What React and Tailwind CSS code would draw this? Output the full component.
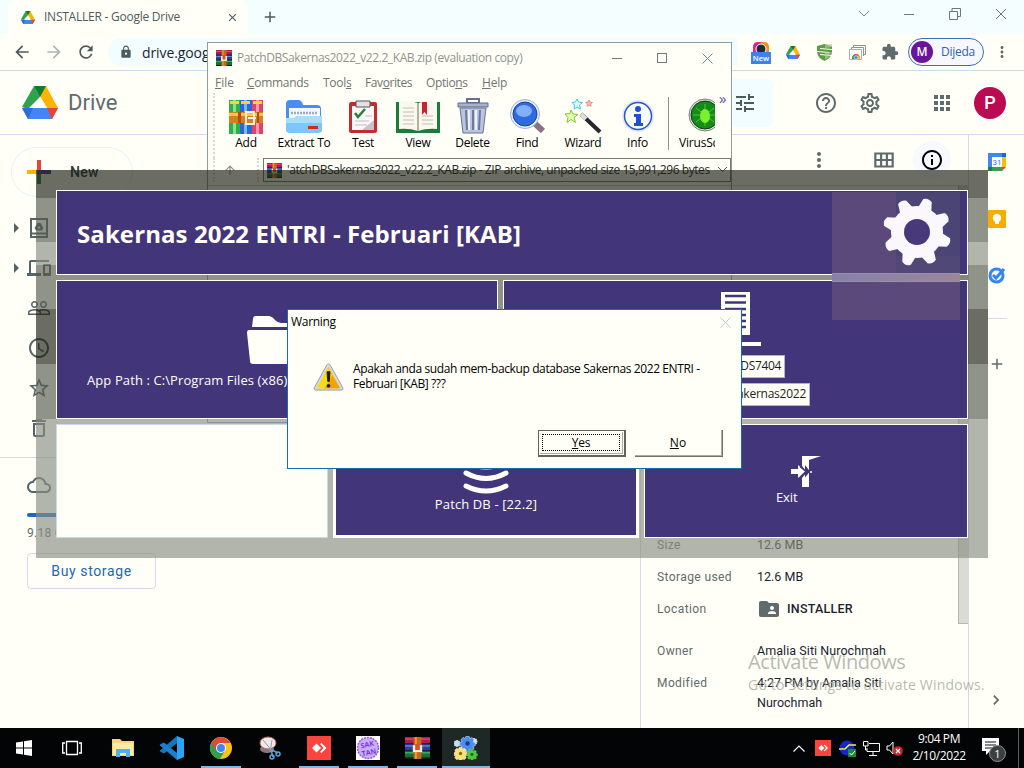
import React from "react";
import {
  MdArrowBack, MdArrowForward, MdRefresh, MdLock, MdExtension, MdMoreVert, MdTune, MdHelpOutline,
  MdOutlineSettings, MdApps, MdOutlineViewModule, MdInfoOutline, MdOutlineDevices, MdPeopleOutline,
  MdAccessTime, MdStarBorder, MdDeleteOutline, MdOutlineCloud, MdFolderShared, MdChevronRight,
  MdArrowUpward, MdArrowRight, MdClose, MdAdd,
} from "react-icons/md";

const ui = "font-['Open_Sans','Noto_Sans',sans-serif]";

function DriveLogo({ className }) {
  return (
    <svg className={className} viewBox="0 0 36 33">
      <path d="M12 0h12l-6 11z" fill="#188038" />
      <path d="M12 0 0 21l6 2 12-12z" fill="#2ea24c" />
      <path d="M24 0 36 22H25L15 5z" fill="#fbb400" />
      <path d="M12 0h9l3 0-6 11z" fill="#127a2e" />
      <path d="M0 22h36l-6 11H6z" fill="#4285f4" />
      <path d="M25 22h11l-6 11z" fill="#ea4335" />
      <path d="M0 22h11L6 33z" fill="#2f6ad9" />
      <path d="M18 11l7 11H11z" fill="#fffff8" />
    </svg>
  );
}

function Books({ className }) {
  return (
    <svg className={className} viewBox="0 0 16 16" preserveAspectRatio="none">
      <path d="M0 0h16v5H0z" fill="#a81e4e" />
      <path d="M0 1h16v1H0z" fill="#e04a70" />
      <path d="M0 5h16v5H0z" fill="#2b3f9a" />
      <path d="M0 6h16v1H0z" fill="#5f8ae0" />
      <path d="M0 10h16v5H0z" fill="#157033" />
      <path d="M0 11h16v1H0z" fill="#43b35f" />
      <path d="M0 4.5h16v.7H0zM0 9.6h16v.7H0zM0 15h16v1H0z" fill="#1c1622" />
      <path d="M5.500 0h5v16h-5z" fill="#c8641c" />
      <path d="M6.500 0h1v16h-1z" fill="#f2a53c" />
      <path d="M5 6h6v5H5z" fill="#f4f0e0" />
      <path d="M6.500 5h3v4.500h-3z" fill="#d8541e" />
    </svg>
  );
}

function BrowserChrome() {
  return (
    <>
      <div className={`${ui} h-[34px] shrink-0 bg-[#f4feff] flex items-end pl-2`}>
        <div className="w-[240px] h-[34px] rounded-t-lg bg-[#fffff8] flex items-center pl-[13px]">
          <DriveLogo className="w-[14px] h-[13px]" />
          <span className="ml-[9px] w-[182px] text-[12px] tracking-[-0.24px] text-[#4d5b5c] whitespace-nowrap">INSTALLER - Google Drive</span>
          <MdClose className="size-[13px] text-[#4d5b5c] shrink-0" />
        </div>
        <MdAdd className="size-[18px] text-[#4d5b5c] ml-[13px] mb-2" />
        <div className="ml-auto h-full flex items-center gap-[31px] pr-[17px] pb-[6px]">
          <svg className="w-[12px] h-[8px]" viewBox="0 0 12 8"><path d="M1 1l5 5 5-5" fill="none" stroke="#7d898a" /></svg>
          <div className="w-[10px] h-px bg-[#6d7778] ml-[3px]" />
          <svg className="size-[12px] ml-[4px]" viewBox="0 0 12 12"><path d="M.5 3.500h8v8h-8zM3 3V.5h8.500v8H9" fill="none" stroke="#6d7778" /></svg>
          <svg className="size-[12px] ml-[3px]" viewBox="0 0 12 12"><path d="M1 1l10 10M11 1L1 11" fill="none" stroke="#6d7778" /></svg>
        </div>
      </div>
      <div className={`${ui} h-[37px] shrink-0 border-b border-[#c8dde8] flex items-center pl-[12px]`}>
        <MdArrowBack className="size-5 text-[#4d5b5c]" />
        <MdArrowForward className="size-5 text-[#a9b7b8] ml-[12px]" />
        <MdRefresh className="size-5 text-[#4d5b5c] ml-[12px]" />
        <div className="ml-[12px] w-[630px] h-[28px] rounded-l-full bg-[#f1fdff] flex items-center pl-[11px]">
          <MdLock className="size-[14px] text-[#4d5b5c]" />
          <span className="ml-[9px] text-[14px] tracking-[-0.1px] text-[#1c2530]">drive.google.com</span>
        </div>
        <div className="ml-auto flex items-center pr-[17px]">
          <svg className="w-[20px] h-[24px]" viewBox="0 0 20 24">
            <path d="M2 12V7q0-5 5-5h3v10z" fill="#e61d8c" /><path d="M10 2h3q5 0 5 5v5h-8z" fill="#f78b1f" />
            <circle cx="10" cy="9" r="5" fill="#222b33" stroke="#fff" /><path d="M0 12h20v12H0z" fill="#3d7ff5" />
            <text x="10" y="21" textAnchor="middle" fontSize="7.500" fontWeight="600" fill="#fff" fontFamily="Open Sans">New</text>
          </svg>
          <DriveLogo className="w-[14px] h-[13px] ml-[15px]" />
          <svg className="w-[15px] h-[17px] ml-[17px]" viewBox="0 0 15 17">
            <path d="M0 2 7.500 0 15 2v5q0 7-7.500 10Q0 14 0 7z" fill="#5d9c45" />
            <path d="M3 4.500l12 1M0 7.500l12 1M3 10.500l11 1" stroke="#fffff8" strokeWidth="1.200" /><path d="M8 0h7v3l-7 1zM8 8h6l-2 5-4 3z" fill="#b9d6a8" opacity=".6" />
          </svg>
          <svg className="w-[17px] h-[15px] ml-[17px]" viewBox="0 0 17 15">
            <path d="M4.500 3V.5h12v9H14M2.500 5V2.500h12V11" fill="none" stroke="#8a9496" />
            <path d="M.5 4.500h12v10H.5z" fill="#fffff8" stroke="#a6afb0" />
            <path d="M3 14q0-5 4-5t4 5z" fill="#e8453a" /><path d="M3 14q0-3 2-4l2 4z" fill="#2fa14f" /><path d="M11 14q0-3-2-4l-2 4z" fill="#fbbd05" /><circle cx="7" cy="12.500" r="1.800" fill="#3d7ff5" stroke="#fff" strokeWidth=".6" />
          </svg>
          <MdExtension className="size-[18px] text-[#5f6b6c] ml-[15px]" />
          <div className="ml-[9px] w-[76px] h-[28px] rounded-full border border-[#3670b8] bg-[#f6f7ff] flex items-center pl-[2px]">
            <span className="size-[22px] rounded-full bg-[#6a149a] text-white text-[12px] font-semibold flex items-center justify-center">M</span>
            <span className="ml-[8px] text-[12px] tracking-[-0.25px] text-[#2c66ae]">Dijeda</span>
          </div>
          <MdMoreVert className="size-[18px] text-[#5f6b6c] ml-[9px] -mr-1" />
        </div>
      </div>
    </>
  );
}

function DriveHeader() {
  return (
    <div className="h-[64px] shrink-0 border-b border-[#d9d6ee] flex items-center pl-[22px]">
      <DriveLogo className="w-[36px] h-[33px]" />
      <span className="ml-[10px] w-[150px] font-['Roboto',sans-serif] text-[22px] leading-none text-[#5f6b6c]">Drive</span>
      <div className="w-[555px] h-[48px] rounded-md bg-[#f1fdff] flex items-center justify-end pr-[16px]">
        <MdTune className="size-6 text-[#4d5b5c]" />
      </div>
      <MdHelpOutline className="size-6 text-[#5f6b6c] ml-[41px]" />
      <MdOutlineSettings className="size-6 text-[#5f6b6c] ml-[20px]" />
      <MdApps className="size-6 text-[#5f6b6c] ml-[48px]" />
      <span className="ml-[20px] size-8 rounded-full bg-[#bc0a52] text-[#fffff8] font-['Roboto',sans-serif] font-medium text-[18px] flex items-center justify-center">P</span>
    </div>
  );
}

function NavRow({ arrow, children }) {
  return (
    <div className="h-10 flex items-center pl-[4px] text-[#55646a]">
      <span className="w-[23px]">{arrow && <MdArrowRight className="size-6" />}</span>
      {children}
    </div>
  );
}

function Sidebar() {
  return (
    <div className="w-[208px] pt-[12px] shrink-0 font-['Roboto',sans-serif]">
      <div className="ml-[11px] w-[122px] h-[50px] rounded-full border border-[#e4f3f8] flex items-center pl-[15px]">
        <svg className="size-6" viewBox="0 0 24 24">
          <path d="M10 0h4v10h-4z" fill="#e8453a" /><path d="M0 10h10v4H0z" fill="#fbb400" />
          <path d="M10 10h14v4H10z" fill="#46489c" /><path d="M10 14h4v10h-4z" fill="#2e8b57" />
        </svg>
        <span className="ml-[19px] text-[14px] font-medium tracking-[0.3px] text-[#2a3a42]">New</span>
      </div>
      <div className="pt-[11px]">
        <NavRow arrow>
          <svg className="size-6" viewBox="0 0 24 24" fill="none" stroke="currentColor" strokeWidth="2">
            <path d="M4 3h16v18H4zM4 17.500h16" /><path d="M10.500 7h3l3 5-1.500 2.500H9L7.500 12z" fill="currentColor" stroke="none" /><path d="M12 10l1.500 2.500h-3z" fill="#fffff8" stroke="none" />
          </svg>
        </NavRow>
        <NavRow arrow><MdOutlineDevices className="size-6" /></NavRow>
        <NavRow><MdPeopleOutline className="size-6" /></NavRow>
        <NavRow><MdAccessTime className="size-6" /></NavRow>
        <NavRow><MdStarBorder className="size-6" /></NavRow>
        <NavRow><MdDeleteOutline className="size-6" /></NavRow>
      </div>
      <div className="mt-[9px] border-t border-[#d9d6ee] pt-[7px]">
        <NavRow><MdOutlineCloud className="size-6" /></NavRow>
      </div>
      <div className="ml-[27px] mt-[8px] w-[150px] h-[4px] rounded-full bg-[#1a68c8]" />
      <div className="ml-[27px] mt-[8px] h-4 leading-4 text-[12px] tracking-[0.3px] text-[#5f6b6c]">9.18 GB used</div>
      <div className="ml-[27px] mt-[12px] w-[129px] h-[36px] rounded border border-[#d9d6ee] flex items-center justify-center text-[14px] tracking-[0.62px] text-[#2068b8]">Buy storage</div>
    </div>
  );
}

function Detail({ label, children, h }) {
  return (
    <div className={`flex ${h}`}>
      <span className="w-[100px] text-[#5f6b6c] text-[12px] tracking-[0.4px]">{label}</span>
      <span className="w-[170px] text-[#1d1d30]">{children}</span>
    </div>
  );
}

function DriveContent() {
  return (
    <div className="flex-1 min-h-0 flex">
      <Sidebar />
      <div className="flex-1 flex flex-col">
        <div className="h-[50px] flex items-center justify-end pr-[17px] text-[#5f6b6c] shrink-0">
          <MdChevronRight className="size-5 mr-[71px]" />
          <MdMoreVert className="size-6 mr-[40px]" />
          <MdOutlineViewModule className="size-[26px] mr-[16px]" />
          <span className="size-[38px] rounded-full bg-[#f6f9ff] flex items-center justify-center"><MdInfoOutline className="size-6 text-black" /></span>
        </div>
        <div className="flex-1 flex">
          <div className="flex-1 border-t border-[#bcd9e8]" />
          <div className="w-[328px] border-l border-[#d9d6ee] border-t flex">
            <div className="flex-1 pl-[16px] pt-[349px] font-['Roboto',sans-serif] text-[12.500px] leading-5 whitespace-nowrap">
              <Detail label="Size" h="h-8">12.6 MB</Detail>
              <Detail label="Storage used" h="h-8">12.6 MB</Detail>
              <Detail label="Location" h="h-[42px]"><span className="flex items-center font-medium tracking-[0.25px]"><MdFolderShared className="size-6 -my-[2px] mr-[6px] text-[#5f6b6c]" />INSTALLER</span></Detail>
              <Detail label="Owner" h="h-8"><span className="tracking-[0.06px]">Amalia Siti Nurochmah</span></Detail>
              <Detail label="Modified" h="h-12">4:27 PM by Amalia Siti<br />Nurochmah</Detail>
            </div>
            <div className="w-[10px] h-[438px] bg-[#d9dcd2] border-l border-b border-[#b4b8ae]" />
          </div>
        </div>
      </div>
      <div className="w-[56px] border-l border-[#d9d6ee] flex flex-col items-center pt-[18px] text-[#5f6b6c] shrink-0">
        <svg className="size-[18px]" viewBox="0 0 18 18">
          <path d="M0 0h14v4H4v10H0z" fill="#4285f4" /><path d="M14 0h4v4h-4z" fill="#1967d2" /><path d="M14 4h4v10h-4z" fill="#fbbc04" /><path d="M4 14h10v4H4z" fill="#2ea24c" /><path d="M0 14h4v4H0z" fill="#188038" /><path d="M14 14h4l-4 4z" fill="#ea4335" /><path d="M4 4h10v10H4z" fill="#fff" />
          <text x="9" y="12" textAnchor="middle" fontSize="8" fill="#2f78e0" fontFamily="Roboto">31</text>
        </svg>
        <svg className="size-[18px] mt-[39px] ml-px" viewBox="0 0 18 18"><rect width="18" height="18" rx="1" fill="#f9ab00" /><circle cx="9" cy="8" r="4.200" fill="#fffff8" /><path d="M7 11h4v3H7z" fill="#fffff8" /></svg>
        <svg className="size-[18px] mt-[38px] ml-px" viewBox="0 0 18 18"><circle cx="8.500" cy="9.500" r="6.500" fill="none" stroke="#3285f5" strokeWidth="3" /><path d="M5 9l3 3 8-9" fill="none" stroke="#3285f5" strokeWidth="3" /></svg>
        <div className="mt-[34px] w-5 h-px bg-[#d9d6ee]" />
        <MdAdd className="size-[18px] mt-[36px]" />
        <MdChevronRight className="size-5 mt-auto mb-[18px] -ml-[2px]" />
      </div>
    </div>
  );
}

const tools = [
  { name: "Add", w: "w-[46px]", art: (
    <svg className="w-[34px] h-[35px]" viewBox="0 0 34 35">
      <path d="M0 1h11v34H0z" fill="#2fae4b" /><path d="M11 1h12v34H11z" fill="#2a66dc" /><path d="M23 1h11v34H23z" fill="#e0426a" />
      <path d="M4 1h3v34H4z" fill="#8be08f" /><path d="M15 1h3v34h-3z" fill="#7db4fa" /><path d="M27 1h3v34h-3z" fill="#fa9ab0" />
      <path d="M1 2h9v3H1zM12 2h9v3h-9zM24 2h9v3h-9z" fill="#f5d24a" /><path d="M0 13h34v11H0z" fill="#d77f1c" /><path d="M0 14h34v3H0z" fill="#f8c552" />
      <path d="M9 13h3v11H9zM28 13h2v11h-2z" fill="#a85410" />
      <path d="M17 13h8v12h-8zM19 19h8" fill="none" stroke="#f5efe0" strokeWidth="2" />
    </svg>) },
  { name: "Extract To", w: "w-[70px]", art: (
    <svg className="w-[38px] h-[35px]" viewBox="0 0 38 35">
      <path d="M1 5q0-4 4-4h8q4 0 5 5h14q4 0 4 4v16H1z" fill="#4a8cf0" /><path d="M4 9h31v12H4z" fill="#f2f8ff" /><path d="M6 14h26" stroke="#9aaccc" strokeWidth="2.500" strokeDasharray="2 1" />
      <path d="M1 19h8l3-2h25v14q0 3-4 3H5q-4 0-4-3z" fill="#7cc6fa" /><path d="M1 19h8l3-2h25v7H1z" fill="#a8defc" /><path d="M23 27h10v3H23z" fill="#d42a1c" />
    </svg>) },
  { name: "Test", w: "w-[48px]", art: (
    <svg className="w-[30px] h-[35px]" viewBox="0 0 30 35">
      <rect x="1" y="3" width="28" height="31" rx="2" fill="#c42a30" /><path d="M4 7h22v24H4z" fill="#fbf6f8" /><path d="M26 21v10H14z" fill="#c9c2cc" />
      <path d="M8 2h14v6H8z" fill="#dfe1e4" stroke="#5a5358" /><path d="M7 14l3 4 7-8" fill="none" stroke="#27803a" strokeWidth="2.500" /><path d="M7 22h14M7 26h12M17 17h7" stroke="#c0bcc4" />
    </svg>) },
  { name: "View", w: "w-[62px]", art: (
    <svg className="w-[44px] h-[35px]" viewBox="0 0 44 35">
      <path d="M0 3h44v31H0z" fill="#1d7a3c" /><path d="M3 3q10-2 19 1 9-3 19-1v27q-10-1-19 2-9-3-19-2z" fill="#faf7ee" /><path d="M22 4v28" stroke="#b8b09c" strokeWidth="2" />
      <path d="M7 9h11M7 13h11M7 17h11M7 21h11M7 25h11M26 17h11M26 21h11M26 25h11" stroke="#c2c0b4" /><path d="M26 3h5v13l-2.500-3-2.500 3z" fill="#c4242c" />
    </svg>) },
  { name: "Delete", w: "w-[47px]", art: (
    <svg className="w-[32px] h-[36px]" viewBox="0 0 32 36">
      <path d="M10 1h12v4H10z" fill="none" stroke="#6a7088" strokeWidth="2" /><path d="M1 5h30v4H1z" fill="#a6b2d2" stroke="#5f6884" />
      <path d="M3 10h26l-3 25H6z" fill="#b8c4e2" stroke="#6a7490" /><path d="M9 12l1 20M16 12v20M23 12l-1 20" stroke="#6e7a9c" strokeWidth="2" /><path d="M12 12v20M19 12v20" stroke="#eef2fc" strokeWidth="2" />
    </svg>) },
  { name: "Find", w: "w-[62px]", art: (
    <svg className="w-[38px] h-[36px]" viewBox="0 0 38 36">
      <path d="M24 23l11 10" stroke="#8a7484" strokeWidth="6" /><circle cx="17" cy="16" r="14.500" fill="#e8f2fc" stroke="#9cb4d4" /><circle cx="17" cy="16" r="12" fill="#2f6ae0" stroke="#1c3fa0" /><ellipse cx="16" cy="13" rx="8" ry="6" fill="#82b0f8" />
    </svg>) },
  { name: "Wizard", w: "w-[50px]", art: (
    <svg className="w-[38px] h-[36px]" viewBox="0 0 38 36">
      <path d="M17 16l19 18" stroke="#26262c" strokeWidth="4" /><path d="M17 16l5 5" stroke="#dcdcdc" strokeWidth="4" />
      <path d="M7 12l2 4 5 .5-4 3 1.500 5-4.500-3-4 3 1-5-3-3.500 5-.5z" fill="#e8fcb8" stroke="#7ccc20" /><path d="M13 1l1.500 3 4 .5-3 2.500 1 4-3.500-2-3 2 .500-4-2.500-2.500 3.500-.5z" fill="#dcfaff" stroke="#40c8ec" /><path d="M25 2l1 2 2.500.5-2 1.500.5 2.500-2-1.500-2 1.500.5-2.500-2-1.500 2.500-.5z" fill="#f8b8b8" stroke="#f09090" />
    </svg>) },
  { name: "Info", w: "w-[59px]", art: (
    <svg className="w-[34px] h-[34px]" viewBox="0 0 34 34">
      <circle cx="17" cy="17" r="16" fill="#e3ebf5" /><circle cx="17" cy="17" r="13.500" fill="#f8fbff" stroke="#2756c8" strokeWidth="1.500" /><circle cx="17" cy="10" r="3" fill="#1e52d0" /><path d="M13 15h7v9h2v3h-9v-3h2v-6h-2z" fill="#1e52d0" />
    </svg>) },
];

function WinRar() {
  return (
    <div className={`${ui} absolute left-[207px] top-[42px] w-[525px] h-[381px] bg-[#fffff8] border border-[#8e9c9e] text-[12px] text-[#6f7471]`}>
      <div className="h-[30px] flex items-center pl-[8px] pr-[18px]">
        <Books className="size-4" />
        <span className="ml-[5px] tracking-[-0.41px] whitespace-nowrap text-[#90938c]">PatchDBSakernas2022_v22.2_KAB.zip (evaluation copy)</span>
        <div className="ml-auto flex items-center gap-[35px]">
          <div className="w-[10px] h-px bg-[#747b7a]" />
          <div className="size-[10px] border border-[#747b7a]" />
          <svg className="size-[11px]" viewBox="0 0 11 11"><path d="M.5.5l10 10M10.500.5l-10 10" stroke="#6d8796" fill="none" /></svg>
        </div>
      </div>
      <div className="h-[20px] flex items-center pl-[7px] whitespace-nowrap">
        <span className="w-[32px]"><u>F</u>ile</span>
        <span className="w-[76px] tracking-[-0.3px]"><u>C</u>ommands</span>
        <span className="w-[42px] tracking-[-0.3px]">Tool<u>s</u></span>
        <span className="w-[61px] tracking-[-0.4px]">Fav<u>o</u>rites</span>
        <span className="w-[56px] tracking-[-0.4px]">Optio<u>n</u>s</span>
        <span className="tracking-[-0.2px]"><u>H</u>elp</span>
      </div>
      <div className="ml-[5px] h-[65px] border-l-2 border-dotted border-[#d8d9d2] flex items-start text-black">
        <div className="flex pl-[8px] pt-[5px]">
          {tools.map((t) => (
            <div key={t.name} className={`${t.w} flex flex-col items-center shrink-0`}>
              <div className="h-[36px] flex items-center">{t.art}</div>
              <span className="mt-px leading-[16px] tracking-[-0.3px] whitespace-nowrap">{t.name}</span>
            </div>
          ))}
        </div>
        <div className="w-px h-[53px] mt-[4px] bg-[#8f938c] ml-[1px]" />
        <div className="ml-[10px] mt-[5px] w-[36px] overflow-hidden">
          <svg className="w-[34px] h-[36px] ml-[9px] max-w-none" viewBox="0 0 34 36">
            <circle cx="17" cy="17" r="16" fill="#dfe3dc" stroke="#78837a" /><circle cx="17" cy="17" r="14" fill="#168a1a" stroke="#0b3f10" />
            <path d="M17 6v22M8 10l18 14M26 10L8 24M5 17h24" stroke="#40d028" /><ellipse cx="17" cy="18" rx="5" ry="7" fill="#7cf02c" />
          </svg>
          <div className="mt-px leading-[16px] tracking-[-0.2px] whitespace-nowrap">VirusScan</div>
        </div>
        <span className="ml-[4px] mt-[-1px] text-[15px] leading-[12px] text-[#53539c]">»</span>
      </div>
      <div className="h-[24px] ml-[5px] flex items-center border-l-2 border-dotted border-[#d8d9d2]">
        <MdArrowUpward className="size-[14px] shrink-0 text-[#8b8f88] ml-[8px]" />
        <div className="ml-[20px] h-full border-l-2 border-dotted border-[#d8d9d2] shrink-0" />
        <div className="ml-[4px] w-[468px] shrink-0 h-[24px] border border-[#74796f] flex items-center pl-[3px] pr-[3px] text-[#242824]">
          <Books className="size-[15px] shrink-0" />
          <span className="ml-[5px] tracking-[-0.44px] whitespace-nowrap">'atchDBSakernas2022_v22.2_KAB.zip - ZIP archive, unpacked size 15,991,296 bytes</span>
          <svg className="ml-auto w-[9px] h-[6px]" viewBox="0 0 9 6"><path d="M0 0l4.500 4.500L9 0" fill="none" stroke="#555b55" /></svg>
        </div>
      </div>
      <div className="h-px mt-[3px] bg-[#b8d8e8]" />
    </div>
  );
}

function Gear() {
  const teeth = [0, 45, 90, 135, 180, 225, 270, 315];
  return (
    <svg className="size-[72px]" viewBox="-36 -36 72 72">
      <g fill="#fbf8fd" transform="rotate(22)">
        {teeth.map((a) => <path key={a} transform={`rotate(${a})`} d="M-8.500-22l2-11q4.500-3 9 0l4 11z" />)}
        <circle r="26" />
      </g>
      <circle r="13" fill="#47397a" />
    </svg>
  );
}

function Updater() {
  const tile = "bg-[#43357a] border border-[#fffff8] text-[#fffff8]";
  return (
    <div className={`${ui} absolute left-[36px] top-[170px] w-[952px] h-[388px]`}>
      <div className="absolute inset-0 flex flex-col">
        <div className="h-[28px] bg-[rgba(28,31,19,0.65)]" />
        <div className="h-[44px] bg-[rgba(83,89,76,0.65)]" />
        <div className="h-[23px] bg-[rgba(137,142,129,0.65)]" />
        <div className="h-[44px] bg-[rgba(83,89,76,0.65)]" />
        <div className="h-[55px] bg-[rgba(28,31,19,0.65)]" />
        <div className="h-[55px] bg-[rgba(83,89,76,0.65)]" />
        <div className="flex-1 bg-[rgba(137,142,129,0.65)]" />
      </div>
      <div className="relative h-full p-[20px] flex flex-col gap-[5px]">
        <div className={`${tile} h-[85px] flex items-center pl-[20px] pt-[2px] text-[24px] font-bold`}>
          <span className="tracking-[0.09px] whitespace-nowrap">Sakernas 2022 ENTRI - Februari [KAB]</span>
        </div>
        <div className="h-[139px] flex gap-[5px]">
          <div className={`${tile} w-[442px] flex flex-col pt-[33px] pl-[30px]`}>
            <svg className="ml-[160px] w-[62px] h-[52px]" viewBox="0 0 62 52" fill="#fffff8">
              <path d="M5 13l1-8q0-3 3-3h12q4 0 7 4 3 3 6 3h17v4zM2 16h58l-4 31q0 3-3 3H6q-3 0-3-3L0 19q0-3 2-3z" />
            </svg>
            <span className="mt-[4px] text-[13px] leading-5 font-medium tracking-[0.1px] whitespace-nowrap">App Path : C:\Program Files (x86)</span>
          </div>
          <div className={`${tile} flex-1 pt-[10px]`}>
            <svg className="ml-[214px] w-[44px] h-[58px]" viewBox="0 0 44 58" fill="#fffff8">
              <path d="M3 1h29v43H3z" /><path d="M0 51h43v4H0z" /><path d="M7 5h21M7 11.500h21M7 18h21M7 24h21M7 30h21M7 36h21" stroke="#43357a" strokeWidth="2.500" />
            </svg>
            <div className="mt-[6px] ml-[170px] w-[111px] h-[23px] bg-[#fffff8] border border-[#b7afcf] text-[#1e1e1e] text-[12px] leading-[19px] text-right pr-[3px] tracking-[-0.35px]">BPS7404DS7404</div>
            <div className="mt-[5px] ml-[170px] w-[136px] h-[23px] bg-[#fffff8] border border-[#b7afcf] text-[#1e1e1e] text-[12px] leading-[19px] text-right pr-[3px] tracking-[-0.25px]">Sakernas2022</div>
          </div>
        </div>
        <div className="flex-1 flex gap-[5px]">
          <div className="w-[272px] bg-[#fffff8] border border-[#c4dce6]" />
          <div className="w-[306px] bg-[#43357a] border-[3px] border-[#fffff8] text-[#fffff8] flex flex-col items-center">
            <svg className="mt-[29px] w-[46px] h-[40px]" viewBox="0 0 46 40" fill="none" stroke="#fffff8" strokeWidth="5" strokeLinecap="round"><path d="M3 6q20 10 40 0M3 17q20 11 40 0M3 30q20 10 40 0" /></svg>
            <span className="mt-[-2px] text-[13px] leading-5 tracking-[0.12px]">Patch DB - [22.2]</span>
          </div>
          <div className={`${tile} flex-1`}>
            <svg className="ml-[146px] mt-[31px] w-[30px] h-[32px]" viewBox="0 0 30 32" fill="#fffff8">
              <path d="M11 0h19l-12 4v27h-7v-9l5-6-5-6zM0 13h7V9l7 6.500L7 22v-4H0z" /><path d="M9 11l6 4.500L9 21" fill="none" stroke="#43357a" /><path d="M14 9l5 6.500-5 6z" fill="#43357a" /><circle cx="20" cy="16" r="1" />
            </svg>
            <div className="ml-[131px] mt-px text-[13px] leading-4 tracking-[-0.1px]">Exit</div>
          </div>
        </div>
      </div>
      <div className="absolute left-[796px] top-[22px] size-[128px] bg-[#5a497a] flex flex-col items-end">
        <div className="size-16 bg-[#4b4576]" />
        <div className="w-16 h-[17px] bg-[#504876]" />
        <div className="w-full h-[9px] bg-gradient-to-r from-[#8681ac] to-[#9b8698] border-y border-[#9b8fae]" />
      </div>
      <div className="absolute left-[845px] top-[26px]"><Gear /></div>
    </div>
  );
}

function WarningDialog() {
  return (
    <div className={`${ui} absolute left-[287px] top-[309px] w-[455px] h-[160px] bg-[#fffff8] border border-[#1b69b0] text-[12px] text-black flex flex-col`}>
      <div className="h-[24px] flex items-center justify-between pl-[3px] pr-[10px]">
        <span className="tracking-[-0.3px]">Warning</span>
        <svg className="size-[11px]" viewBox="0 0 11 11"><path d="M.5.5l10 10M10.500.5l-10 10" stroke="#b5cfdc" fill="none" /></svg>
      </div>
      <div className="flex pl-[25px] pt-[27px]">
        <svg className="w-[31px] h-[29px] mt-[2px]" viewBox="0 0 32 30">
          <path d="M16 1q1.500 0 2 1.500L31 26q0 2-2 2H3q-2 0-2-2L14 2.500Q14.500 1 16 1z" fill="#d8d8d8" stroke="#9b9b9b" /><path d="M16 4l12 22H4z" fill="#f8c800" /><path d="M16 4v22H4z" fill="#f9dc18" /><path d="M20 13l8 13H12z" fill="#f0a400" />
          <path d="M14.500 9h3l-.7 10h-1.600z" fill="#201c14" stroke="#201c14" /><circle cx="16" cy="23.500" r="1.900" fill="#201c14" />
        </svg>
        <p className="ml-[9px] leading-[15px] tracking-[-0.39px] whitespace-nowrap">Apakah anda sudah mem-backup database Sakernas 2022 ENTRI -<br />Februari [KAB] ???</p>
      </div>
      <div className="mt-auto mb-[11px] pr-[18px] flex justify-end gap-[9px]">
        <div className="w-[88px] h-[27px] border border-[#5f655c] p-px border-r-2 border-b-2">
          <div className="h-full p-[2px] border-r border-b border-[#a9ada3]">
            <div className="h-full border border-dotted border-black flex items-center justify-center pt-px"><span className="tracking-[-0.3px]"><u>Y</u>es</span></div>
          </div>
        </div>
        <div className="w-[88px] h-[27px] border-r border-b border-[#6c7268]">
          <div className="h-full border-r border-b border-[#a9ada3] flex items-center justify-center pt-px"><span><u>N</u>o</span></div>
        </div>
      </div>
    </div>
  );
}

const smallGear = "M-1.500-6h3l.5 2 2-1 2 2-1 2 2 .5v3l-2 .5 1 2-2 2-2-1-.5 2h-3l-.5-2-2 1-2-2 1-2-2-.5v-3l2-.5-1-2 2-2 2 1z";

function Task({ bar = "", bg = "", children }) {
  return (
    <div className={`w-12 h-full flex items-center justify-center relative ${bg}`}>
      {children}
      {bar && <div className={`absolute bottom-0 h-[2px] bg-[#76b9ed] ${bar}`} />}
    </div>
  );
}

function AnyDesk({ className }) {
  return (
    <svg className={className} viewBox="0 0 24 24"><path d="M0 0h24v24H0z" fill="#fb443b" /><path d="M9.500 7.500L14 12l-4.500 4.500L5 12zM13 8l1.500-1L19.500 12l-5 5-1.500-1 3.500-4z" fill="#fff" /></svg>
  );
}

function Taskbar() {
  return (
    <div className="h-10 shrink-0 bg-[#020405] flex text-white relative">
      <Task><svg className="size-4" viewBox="0 0 16 16" fill="#fff"><path d="M0 2.500l7-1v6H0zM8 1.300L16 0v7.500H8zM0 8.500h7v6l-7-1zM8 8.500h8V16l-8-1.300z" /></svg></Task>
      <Task><svg className="w-[20px] h-[16px]" viewBox="0 0 20 16" fill="none" stroke="#fff" strokeWidth="1.300"><path d="M4.500 1.500h11v13h-11zM3 3H.7v10H3M17 3h2.300v10H17" /></svg></Task>
      <div className="w-[3px]" />
      <Task><svg className="w-[22px] h-[20px]" viewBox="0 0 22 20"><path d="M0 1h8l2 2h12v15H0z" fill="#f7d67a" /><path d="M1 5h20v12H1z" fill="#fce9a4" /><path d="M4 11h14v8h-4v-4H8v4H4z" fill="#4ab4e8" /></svg></Task>
      <div className="w-px" />
      <Task><svg className="size-6" viewBox="0 0 24 24"><path d="M17 0v7L4 17.500 0 15.500v-1z" fill="#1377c0" /><path d="M17 24v-7L4 6.500 0 8.500v1z" fill="#1b80cc" /><path d="M17 0l7 3v18l-7 3z" fill="#2aa4f4" /></svg></Task>
      <div className="w-px" />
      <Task bar="w-10"><svg className="size-[22px]" viewBox="0 0 22 22"><circle cx="11" cy="11" r="11" fill="#fbc116" /><path d="M11 11L1.500 5.500A11 11 0 0 0 10 22l5-8.500z" fill="#30a04f" /><path d="M1.500 5.500A11 11 0 0 1 20.500 6H11l-5 7.500z" fill="#e0483c" /><circle cx="11" cy="11" r="5" fill="#fff" /><circle cx="11" cy="11" r="4" fill="#4285f4" /></svg></Task>
      <div className="w-px" />
      <Task><svg className="size-6" viewBox="0 0 24 24"><ellipse cx="9" cy="13" rx="7" ry="4" fill="#827880" /><ellipse cx="10" cy="7" rx="8" ry="6" fill="#eeeaec" stroke="#c86060" /><path d="M5 4l10 12M14 4l-2 12" stroke="#9a9a9c" /><path d="M13 14l2 7M14 14l6 3" stroke="#5aa4dc" strokeWidth="1.500" /><circle cx="14" cy="21" r="2" stroke="#5aa4dc" strokeWidth="1.500" fill="none" /><circle cx="20" cy="18" r="2" stroke="#5aa4dc" strokeWidth="1.500" fill="none" /></svg></Task>
      <div className="w-px" />
      <Task bar="w-10"><AnyDesk className="size-6" /></Task>
      <div className="w-px" />
      <Task bar="w-10"><svg className="size-6" viewBox="0 0 24 24"><path d="M0 0h24v24H0z" fill="#fff" /><circle cx="12" cy="12" r="10.500" fill="#c9aefa" stroke="#9254ee" strokeWidth="1.500" strokeDasharray="2 1" /><g transform="rotate(-12 12 12)"><text x="12" y="11" textAnchor="middle" fontSize="7" fontWeight="700" fill="#7a36e0" fontFamily="Open Sans">SAK</text><text x="12" y="19" textAnchor="middle" fontSize="7" fontWeight="700" fill="#7a36e0" fontFamily="Open Sans">TAN</text></g></svg></Task>
      <div className="w-px" />
      <Task bar="w-10"><Books className="w-[25px] h-[22px]" /></Task>
      <div className="w-px" />
      <Task bar="w-full" bg="bg-[#1d2827]">
        <svg className="size-6" viewBox="0 0 24 24">
          <g fill="#c9dcf2" transform="translate(3 7) scale(.5)"><path d={smallGear} /></g>
          <g fill="#dce4ee" transform="translate(20 5) scale(.5)"><path d={smallGear} /></g>
          <g transform="translate(13.500 7) scale(1.100)"><path d={smallGear} fill="#4a8cf0" stroke="#bcd8ff" strokeWidth=".6" /><circle r="2" cy=".5" fill="#14408c" /></g>
          <g transform="translate(6.500 17) scale(.95)"><path d={smallGear} fill="#fae07a" stroke="#fff6c0" strokeWidth=".6" /><circle r="1.800" cy=".5" fill="#8a6a14" /></g>
          <g transform="translate(18 18) scale(.8)"><path d={smallGear} fill="#4cc83c" /><circle r="1.800" cy=".5" fill="#145c14" /></g>
        </svg>
      </Task>
      <div className="ml-auto flex items-center">
        <svg className="w-[12px] h-[7px]" viewBox="0 0 12 7"><path d="M.5 6.500L6 1l5.500 5.500" fill="none" stroke="#fff" strokeWidth="1.200" /></svg>
        <AnyDesk className="size-4 ml-[10px]" />
        <svg className="size-[17px] ml-[8px]" viewBox="0 0 17 17"><circle cx="8" cy="8" r="7.500" fill="#1428c8" /><path d="M0 9h6l4-4h7" stroke="#f2f032" strokeWidth="1.500" fill="none" /><path d="M9 9h8v8H9z" fill="#1f8a34" /><path d="M10.500 13l2 2 3.500-4" stroke="#fff" fill="none" /></svg>
        <svg className="w-[17px] h-[15px] ml-[7px]" viewBox="0 0 17 15" fill="none" stroke="#fff"><path d="M6 2.500h10.500v8H4V7M10 11v3M6 14.500h8M.5.500H5V5H.5zM2.500 5v4H4" /></svg>
        <svg className="w-[17px] h-[15px] ml-[6px]" viewBox="0 0 17 15"><path d="M1 5h2.500L7 1v12L3.500 9H1z" fill="none" stroke="#fff" /><circle cx="12" cy="10" r="4.800" fill="#d3222c" /><path d="M10 8l4 4M14 8l-4 4" stroke="#fff" strokeWidth="1.200" /></svg>
        <div className={`${ui} w-[56px] ml-[8px] text-center text-[12px] leading-[17px] tracking-[-0.4px] whitespace-nowrap pb-[2px]`}>9:04 PM<br />2/10/2022</div>
        <div className="relative ml-[15px] w-[24px] h-[26px]">
          <svg className="w-[17px] h-[17px] mt-[3px]" viewBox="0 0 17 17"><path d="M0 0h17v13H8l-4 4v-4H0z" fill="#fff" /><path d="M3 4h11M3 7h11M3 10h8" stroke="#111" /></svg>
          <span className={`${ui} absolute left-[7px] top-[10px] size-[17px] rounded-full border border-[#8d9494] bg-[#3a4040] text-[11px] leading-none flex items-center justify-center`}>1</span>
        </div>
        <div className="ml-[12px] w-px h-10 bg-[#5a5f60] mr-[5px]" />
      </div>
    </div>
  );
}

export default function App() {
  return (
    <div className="w-[1024px] h-[768px] relative overflow-hidden flex flex-col bg-[#fffff8]">
      <div className="flex-1 min-h-0 flex flex-col">
        <BrowserChrome />
        <DriveHeader />
        <DriveContent />
      </div>
      <Taskbar />
      <WinRar />
      <Updater />
      <WarningDialog />
      <div className={`${ui} absolute left-[748px] top-[650px] text-[#a9ada3]/85 whitespace-nowrap`}>
        <div className="text-[20px] leading-6 tracking-[-0.42px]">Activate Windows</div>
        <div className="text-[14px] leading-[22px] tracking-[0.21px]">Go to Settings to activate Windows.</div>
      </div>
    </div>
  );
}
